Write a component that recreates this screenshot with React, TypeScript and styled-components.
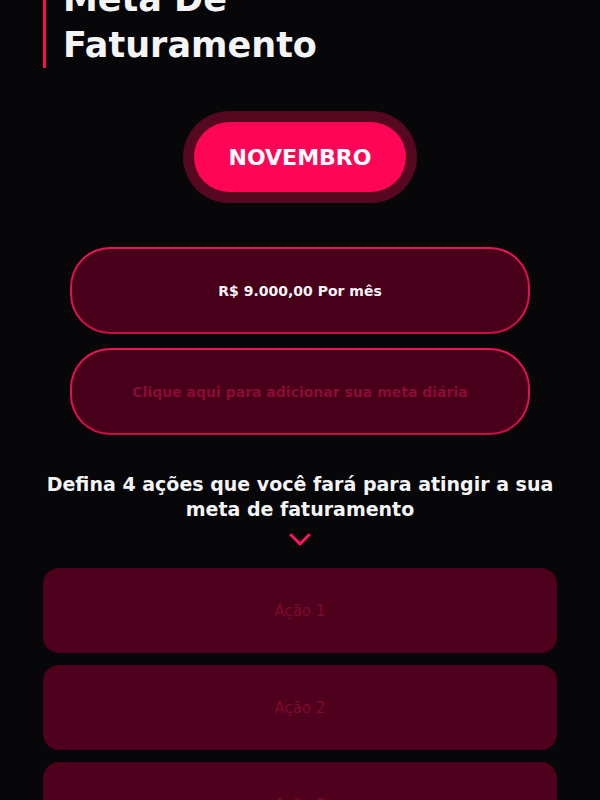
import React from "react";
import styled, { createGlobalStyle } from "styled-components";

const GlobalStyle = createGlobalStyle`
  html, body {
    margin: 0;
    padding: 0;
    background: #070709;
    height: 100%;
    overflow: hidden;
  }
  body {
    font-family: "DejaVu Sans", Inter, sans-serif;
    color: #f4f4f6;
  }
`;

const actions = ["Ação 1", "Ação 2", "Ação 3", "Ação 4"];

const App: React.FC = () => {
  return (
    <>
      <GlobalStyle />
      <Page>
        <Title>
          Meta De
          <br />
          Faturamento
        </Title>

        <MonthRing>
          <MonthButton>NOVEMBRO</MonthButton>
        </MonthRing>

        <Goals>
          <GoalCard>
            <GoalText>R$ 9.000,00 Por mês</GoalText>
          </GoalCard>
          <GoalCard>
            <GoalText $placeholder>Clique aqui para adicionar sua meta diária</GoalText>
          </GoalCard>
        </Goals>

        <Heading>Defina 4 ações que você fará para atingir a sua meta de faturamento</Heading>
        <Chevron width="24" height="16" viewBox="0 0 24 16">
          <path d="M3 3 L12 12 L21 3" fill="none" stroke="#ff1461" strokeWidth="3" strokeLinecap="round" strokeLinejoin="round" />
        </Chevron>

        <ActionList>
          {actions.map((a) => (
            <ActionCard key={a}>{a}</ActionCard>
          ))}
        </ActionList>
      </Page>
    </>
  );
};

export default App;

const Page = styled.div`
  display: flex;
  flex-direction: column;
  align-items: center;
  padding: 0 43px;
  margin-top: -24px;
`;

const Title = styled.h1`
  align-self: stretch;
  margin: 0;
  padding-left: 17px;
  border-left: 3px solid #ff0a5a;
  font-size: 35px;
  line-height: 46px;
  font-weight: 700;
  color: #f4f4f6;
`;

const MonthRing = styled.div`
  margin-top: 43px;
  padding: 11px;
  border-radius: 60px;
  background: #55081f;
`;

const MonthButton = styled.button`
  width: 212px;
  height: 70px;
  border: none;
  border-radius: 40px;
  background: #ff0558;
  color: #fff;
  font-family: "DejaVu Sans", sans-serif;
  font-size: 22px;
  font-weight: 700;
`;

const Goals = styled.div`
  margin-top: 44px;
  width: 460px;
  display: flex;
  flex-direction: column;
  gap: 14px;
`;

const GoalCard = styled.div`
  height: 87px;
  box-sizing: border-box;
  border-radius: 40px;
  border: 2px solid #e0124f;
  border-top-color: #e8145a;
  border-bottom-color: #c80f45;
  background: #48001a;
  display: flex;
  align-items: center;
  justify-content: center;
`;

const GoalText = styled.span<{ $placeholder?: boolean }>`
  font-size: 14px;
  font-weight: 700;
  color: ${(p) => (p.$placeholder ? "#8a0b36" : "#f4f4f6")};
`;

const Heading = styled.h2`
  margin: 37px 0 0;
  font-size: 19px;
  line-height: 25px;
  font-weight: 700;
  text-align: center;
  color: #f4f4f6;
`;

const Chevron = styled.svg`
  margin-top: 10px;
  display: block;
`;

const ActionList = styled.div`
  align-self: stretch;
  margin-top: 20px;
  display: flex;
  flex-direction: column;
  gap: 12px;
`;

const ActionCard = styled.div`
  height: 85px;
  border-radius: 16px;
  background: #4e001c;
  display: flex;
  align-items: center;
  justify-content: center;
  color: #7f0a32;
  font-size: 15px;
  font-weight: 400;
`;
